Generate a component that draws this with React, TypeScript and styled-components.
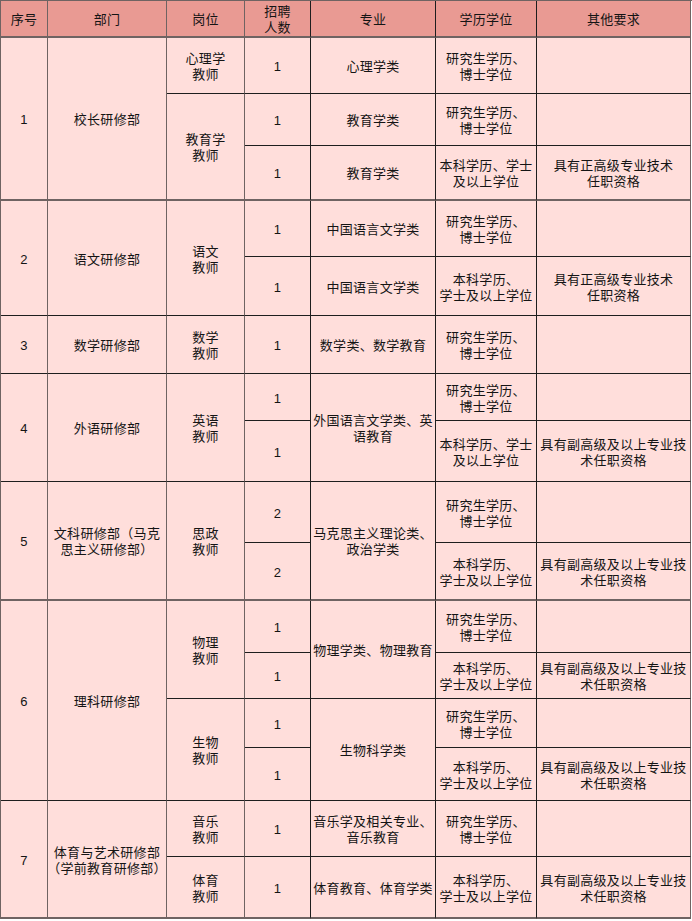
import React from "react";
import styled, { createGlobalStyle } from "styled-components";

const Global = createGlobalStyle`
  html, body { margin: 0; padding: 0; background: #ffffff; }
  body { font-family: "Liberation Sans", "Noto Sans CJK SC", sans-serif; }
`;

const GRAY = "#6f6362";
const DARK = "#1e1e1e";

const Table = styled.div`
  display: grid;
  grid-template-columns: 47px 119px 78px 66px 125px 101px 154px;
  grid-template-rows: 37px 56px 52px 55px 56px 59px 58px 47px 61px 61px 58px 52px 46px 49px 53px 56px 62px;
  width: 691px;
  border-left: 1px solid ${GRAY};
  border-top: 1px solid ${GRAY};
  box-sizing: content-box;
`;

const Cell = styled.div<{ $c: number; $r: number; $s: number; $head?: boolean; $gb?: boolean; $gr?: boolean }>`
  grid-column: ${(p) => p.$c};
  grid-row: ${(p) => p.$r} / span ${(p) => p.$s};
  box-sizing: border-box;
  display: flex;
  align-items: center;
  justify-content: center;
  text-align: center;
  white-space: pre;
  font-size: 13px;
  line-height: 16px;
  letter-spacing: 0.3px;
  color: #141414;
  background: ${(p) => (p.$head ? "#e99a93" : "#ffdedb")};
  border-right: 1px solid ${(p) => (p.$gr ? GRAY : DARK)};
  border-bottom: ${(p) => (p.$gb ? `2px solid ${GRAY}` : `1px solid ${DARK}`)};
  padding-top: 3px;
`;

type C = { c: number; r: number; s?: number; t: string };

const G = "研究生学历、\n博士学位";
const B1 = "本科学历、学士\n及以上学位";
const B2 = "本科学历、\n学士及以上学位";
const Z = "具有正高级专业技术\n任职资格";
const F = "具有副高级及以上专业技\n术任职资格";

const head: string[] = ["序号", "部门", "岗位", "招聘\n人数", "专业", "学历学位", "其他要求"];

const cells: C[] = [
  { c: 1, r: 2, s: 3, t: "1" },
  { c: 2, r: 2, s: 3, t: "校长研修部" },
  { c: 3, r: 2, t: "心理学\n教师" },
  { c: 3, r: 3, s: 2, t: "教育学\n教师" },
  { c: 4, r: 2, t: "1" },
  { c: 4, r: 3, t: "1" },
  { c: 4, r: 4, t: "1" },
  { c: 5, r: 2, t: "心理学类" },
  { c: 5, r: 3, t: "教育学类" },
  { c: 5, r: 4, t: "教育学类" },
  { c: 6, r: 2, t: G },
  { c: 6, r: 3, t: G },
  { c: 6, r: 4, t: B1 },
  { c: 7, r: 2, t: "" },
  { c: 7, r: 3, t: "" },
  { c: 7, r: 4, t: Z },
  { c: 1, r: 5, s: 2, t: "2" },
  { c: 2, r: 5, s: 2, t: "语文研修部" },
  { c: 3, r: 5, s: 2, t: "语文\n教师" },
  { c: 4, r: 5, t: "1" },
  { c: 4, r: 6, t: "1" },
  { c: 5, r: 5, t: "中国语言文学类" },
  { c: 5, r: 6, t: "中国语言文学类" },
  { c: 6, r: 5, t: G },
  { c: 6, r: 6, t: B2 },
  { c: 7, r: 5, t: "" },
  { c: 7, r: 6, t: Z },
  { c: 1, r: 7, t: "3" },
  { c: 2, r: 7, t: "数学研修部" },
  { c: 3, r: 7, t: "数学\n教师" },
  { c: 4, r: 7, t: "1" },
  { c: 5, r: 7, t: "数学类、数学教育" },
  { c: 6, r: 7, t: G },
  { c: 7, r: 7, t: "" },
  { c: 1, r: 8, s: 2, t: "4" },
  { c: 2, r: 8, s: 2, t: "外语研修部" },
  { c: 3, r: 8, s: 2, t: "英语\n教师" },
  { c: 4, r: 8, t: "1" },
  { c: 4, r: 9, t: "1" },
  { c: 5, r: 8, s: 2, t: "外国语言文学类、英\n语教育" },
  { c: 6, r: 8, t: G },
  { c: 6, r: 9, t: B1 },
  { c: 7, r: 8, t: "" },
  { c: 7, r: 9, t: F },
  { c: 1, r: 10, s: 2, t: "5" },
  { c: 2, r: 10, s: 2, t: "文科研修部（马克\n思主义研修部）" },
  { c: 3, r: 10, s: 2, t: "思政\n教师" },
  { c: 4, r: 10, t: "2" },
  { c: 4, r: 11, t: "2" },
  { c: 5, r: 10, s: 2, t: "马克思主义理论类、\n政治学类" },
  { c: 6, r: 10, t: G },
  { c: 6, r: 11, t: B2 },
  { c: 7, r: 10, t: "" },
  { c: 7, r: 11, t: F },
  { c: 1, r: 12, s: 4, t: "6" },
  { c: 2, r: 12, s: 4, t: "理科研修部" },
  { c: 3, r: 12, s: 2, t: "物理\n教师" },
  { c: 3, r: 14, s: 2, t: "生物\n教师" },
  { c: 4, r: 12, t: "1" },
  { c: 4, r: 13, t: "1" },
  { c: 4, r: 14, t: "1" },
  { c: 4, r: 15, t: "1" },
  { c: 5, r: 12, s: 2, t: "物理学类、物理教育" },
  { c: 5, r: 14, s: 2, t: "生物科学类" },
  { c: 6, r: 12, t: G },
  { c: 6, r: 13, t: B2 },
  { c: 6, r: 14, t: G },
  { c: 6, r: 15, t: B2 },
  { c: 7, r: 12, t: "" },
  { c: 7, r: 13, t: F },
  { c: 7, r: 14, t: "" },
  { c: 7, r: 15, t: F },
  { c: 1, r: 16, s: 2, t: "7" },
  { c: 2, r: 16, s: 2, t: "体育与艺术研修部\n（学前教育研修部）" },
  { c: 3, r: 16, t: "音乐\n教师" },
  { c: 3, r: 17, t: "体育\n教师" },
  { c: 4, r: 16, t: "1" },
  { c: 4, r: 17, t: "1" },
  { c: 5, r: 16, t: "音乐学及相关专业、\n音乐教育" },
  { c: 5, r: 17, t: "体育教育、体育学类" },
  { c: 6, r: 16, t: G },
  { c: 6, r: 17, t: B2 },
  { c: 7, r: 16, t: "" },
  { c: 7, r: 17, t: F },
];

const grayRightCols = new Set([1, 2, 3, 7]);
const grayBottomEnds = new Set([4, 11, 17]);

export default function App() {
  return (
    <>
      <Global />
      <Table>
        {head.map((t, i) => (
          <Cell key={"h" + i} $c={i + 1} $r={1} $s={1} $head $gb $gr={grayRightCols.has(i + 1)}>
            {t}
          </Cell>
        ))}
        {cells.map((x, i) => {
          const s = x.s ?? 1;
          return (
            <Cell
              key={i}
              $c={x.c}
              $r={x.r}
              $s={s}
              $gr={grayRightCols.has(x.c)}
              $gb={grayBottomEnds.has(x.r + s - 1)}
            >
              {x.t}
            </Cell>
          );
        })}
      </Table>
    </>
  );
}
